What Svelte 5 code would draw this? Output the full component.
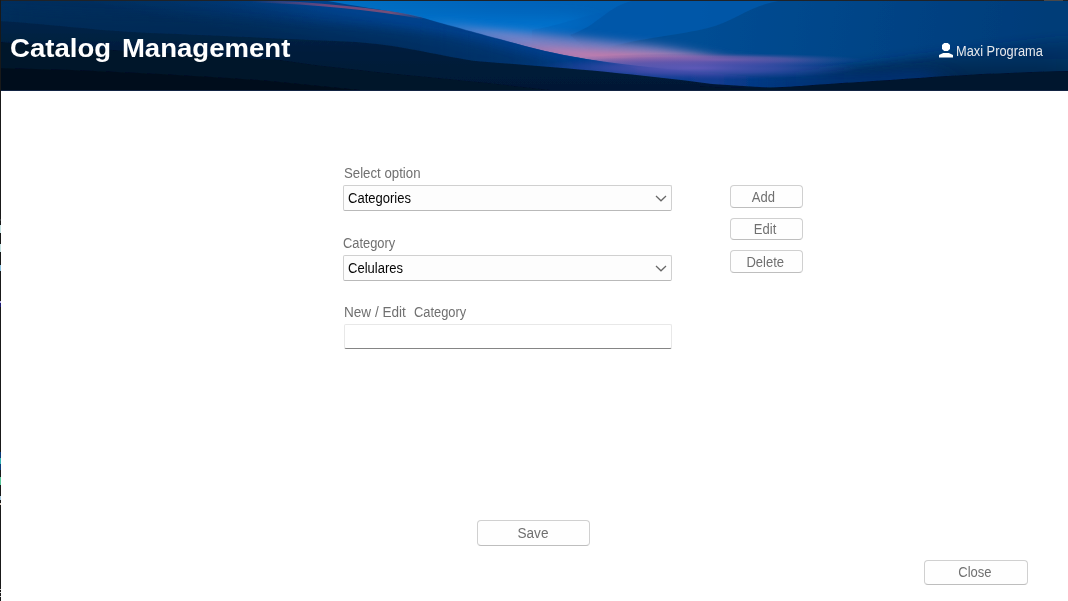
<script>
  let option = $state('Categories');
  let category = $state('Celulares');
  let draft = $state('');
  const edge = [
    [219, 2, '#3b3f42'], [225, 8, '#c7e3e3'], [244, 8, '#c7e3e3'], [265, 6, '#8ec3e0'],
    [301, 2, '#b9b2e6'], [303, 4, '#191970'], [452, 18, '#0b3a78'], [458, 6, '#35b5b5'],
    [477, 8, '#57c79a'], [496, 4, '#a8cbe0'], [503, 2, '#ddd0c4'], [589, 1, '#ccc'],
    [592, 1, '#ccc'], [596, 1, '#ccc']
  ];
</script>

{#snippet chevron()}
  <svg class="chevron" viewBox="0 0 12 7" width="12" height="7" aria-hidden="true">
    <path d="M1 1 L6 5.8 L11 1" fill="none" stroke="#686868" stroke-width="1.25" />
  </svg>
{/snippet}

<div class="window">
  <svg class="edge" width="1" height="601" aria-hidden="true">
    <rect width="1" height="601" fill="#191919" />
    {#each edge as [y, h, fill]}
      <rect {y} width="1" height={h} {fill} />
    {/each}
  </svg>
  <header>
    <svg class="scenery" viewBox="0 0 1068 91" width="1068" height="91" preserveAspectRatio="none" aria-hidden="true">
      <defs>
        <linearGradient id="sky" x1="0" x2="1068" y1="0" y2="0" gradientUnits="userSpaceOnUse">
          <stop offset=".3" stop-color="#0070c4" />
          <stop offset=".46" stop-color="#0064bb" />
          <stop offset=".6" stop-color="#0060b4" />
          <stop offset=".72" stop-color="#0057a5" />
          <stop offset="1" stop-color="#004a86" />
        </linearGradient>
        <linearGradient id="bright" x1="0" y1="0" x2="0" y2="1">
          <stop offset="0" stop-color="#0084e6" stop-opacity="0" />
          <stop offset=".6" stop-color="#0084e2" stop-opacity=".75" />
          <stop offset="1" stop-color="#0084e2" stop-opacity=".6" />
        </linearGradient>
        <linearGradient id="ridge" x1="690" y1="4" x2="1040" y2="60" gradientUnits="userSpaceOnUse">
          <stop offset="0" stop-color="#004e95" />
          <stop offset=".4" stop-color="#00468a" />
          <stop offset="1" stop-color="#003c78" />
        </linearGradient>
        <linearGradient id="fadeRight" x1="0" y1="0" x2="0" y2="1">
          <stop offset="0" stop-color="#002a58" stop-opacity=".3" />
          <stop offset="1" stop-color="#001a3a" stop-opacity="1" />
        </linearGradient>
        <linearGradient id="hill" x1="330" y1="8" x2="322" y2="50" gradientUnits="userSpaceOnUse">
          <stop offset="0" stop-color="#00428c" />
          <stop offset=".4" stop-color="#003774" />
          <stop offset="1" stop-color="#002a58" />
        </linearGradient>
        <linearGradient id="hillRight" x1="420" x2="790" y1="0" y2="0" gradientUnits="userSpaceOnUse">
          <stop offset="0" stop-color="#003d85" stop-opacity=".3" />
          <stop offset=".5" stop-color="#003f91" stop-opacity=".9" />
          <stop offset=".8" stop-color="#1c3f9a" stop-opacity=".7" />
          <stop offset="1" stop-color="#003b91" stop-opacity="0" />
        </linearGradient>
        <linearGradient id="left" x1="0" x2="320" y1="0" y2="0" gradientUnits="userSpaceOnUse">
          <stop offset="0" stop-color="#00305f" stop-opacity=".8" />
          <stop offset="1" stop-color="#002e5b" stop-opacity="0" />
        </linearGradient>
        <linearGradient id="rim" x1="250" x2="425" y1="0" y2="0" gradientUnits="userSpaceOnUse">
          <stop offset="0" stop-color="#794a78" stop-opacity="0" />
          <stop offset=".45" stop-color="#6e477e" />
          <stop offset=".8" stop-color="#755078" />
          <stop offset="1" stop-color="#755078" stop-opacity="0" />
        </linearGradient>
        <linearGradient id="band" x1="0" x2="0" y1="21" y2="85" gradientUnits="userSpaceOnUse">
          <stop offset="0" stop-color="#002449" />
          <stop offset=".5" stop-color="#001d3b" />
          <stop offset="1" stop-color="#001936" />
        </linearGradient>
        <radialGradient id="violet">
          <stop offset="0" stop-color="#6058b8" stop-opacity=".95" />
          <stop offset=".5" stop-color="#4a4cab" stop-opacity=".65" />
          <stop offset="1" stop-color="#303f9c" stop-opacity="0" />
        </radialGradient>
        <radialGradient id="mauve">
          <stop offset="0" stop-color="#a070b8" stop-opacity=".85" />
          <stop offset=".5" stop-color="#7f60b0" stop-opacity=".55" />
          <stop offset="1" stop-color="#404da0" stop-opacity="0" />
        </radialGradient>
        <filter id="b1" x="-20%" y="-60%" width="140%" height="220%"><feGaussianBlur stdDeviation="14 4" /></filter>
        <filter id="b2" x="-30%" y="-100%" width="160%" height="300%"><feGaussianBlur stdDeviation="26 3.5" /></filter>
        <filter id="b3" x="-5%" y="-10%" width="110%" height="120%"><feGaussianBlur stdDeviation=".7" /></filter>
      </defs>
      <rect width="1068" height="91" fill="url(#sky)" />
      <path d="M330 8H560C610 16 590 32 530 34L560 58H330Z" fill="url(#bright)" filter="url(#b1)" />
      <path d="M532 30C568 24 588 12 640 6V50H532Z" fill="#005db5" opacity=".3" filter="url(#b3)" />
      <path d="M570 35C600 25 606 6 636 0H1068V60H600Z" fill="#0056a7" opacity=".8" filter="url(#b3)" />
      <path d="M610 47C640 38 680 35 708 28C738 20 750 4 786 0H1068V91H600Z" fill="url(#ridge)" filter="url(#b3)" />
      <path d="M820 72C900 60 980 48 1098 34V95H820Z" fill="url(#fadeRight)" filter="url(#b2)" />
      <path d="M660 74C730 76 850 74 930 68L960 95H620Z" fill="#003377" opacity=".8" filter="url(#b1)" />
      <path d="M430 22L470 28L520 32L590 39L660 46L710 56L710 68L600 68L540 58L470 36Z" fill="#8a84c4" opacity=".85" filter="url(#b1)" />
      <path d="M490 43L570 49L650 53L730 59L710 63L610 64L550 57Z" fill="#d27ba8" opacity=".85" filter="url(#b2)" />
      <ellipse cx="715" cy="60" rx="150" ry="7" fill="url(#mauve)" />
      <path d="M0 0H322C370 9 405 12 430 20C482 35 510 42 545 51C590 61 620 63 650 73L680 90H0Z" fill="url(#hill)" filter="url(#b3)" />
      <path d="M420 17C482 34 510 42 545 51C600 63 640 67 790 80V91H420Z" fill="url(#hillRight)" filter="url(#b3)" />
      <ellipse cx="695" cy="68" rx="165" ry="12" fill="url(#violet)" />
      <rect width="320" height="91" fill="url(#left)" />
      <path d="M250 1C310 3 370 8 423 18" fill="none" stroke="url(#rim)" stroke-width="2.6" filter="url(#b3)" />
      <path d="M0 8C90 17 180 14 260 20C350 28 420 26 490 45L570 67L0 70Z" fill="#002954" opacity=".5" filter="url(#b1)" />
      <path d="M0 21C60 25 100 31 150 33C230 36 310 40 356 42C400 45 430 54 475 61C540 66 630 73 712 84L820 91H0Z" fill="url(#band)" filter="url(#b3)" />
      <path d="M0 42C80 49 190 54 280 60C350 71 450 78 550 90H0Z" fill="#001329" filter="url(#b3)" />
      <path d="M0 68C100 70 220 77 270 81L370 91H0Z" fill="#000c1e" filter="url(#b3)" />
      <path d="M700 86C770 91 800 85 860 82C930 77 980 73 1070 71V92H700Z" fill="#00122d" filter="url(#b3)" />
      <rect width="1068" height="1" fill="#202226" />
      <rect x="1044" width="19" height="1" fill="#4a4848" />
      <rect y="90" width="1068" height="1" fill="#122342" />
    </svg>
    <h1>Catalog Management</h1>
    <div class="user">
      <svg viewBox="0 0 14 15" width="14" height="15" aria-hidden="true">
        <path d="M5.2 0H8.8L11 2V6L8.8 8H5.2L3 6V2Z M4.2 10H9.8L14 12V14.5H0V12Z" fill="#fff" />
      </svg>
      <span>Maxi Programa</span>
    </div>
  </header>

  <main>
    <div class="fields">
      <div class="field">
        <span class="label l1"><span>Select option</span></span>
        <div class="select" role="combobox" aria-expanded="false" aria-controls="none" tabindex="0"><span>{option}</span>{@render chevron()}</div>
      </div>
      <div class="field second">
        <span class="label l2"><span>Category</span></span>
        <div class="select" role="combobox" aria-expanded="false" aria-controls="none" tabindex="0"><span>{category}</span>{@render chevron()}</div>
      </div>
      <div class="field third">
        <label class="label l3" for="draft"><span>New / Edit</span><span>Category</span></label>
        <input id="draft" bind:value={draft} />
      </div>
    </div>
    <div class="actions">
      <button class="add"><span>Add</span></button>
      <button class="edit"><span>Edit</span></button>
      <button class="delete"><span>Delete</span></button>
    </div>
  </main>
  <footer>
    <button class="save"><span>Save</span></button>
    <button class="close"><span>Close</span></button>
  </footer>
</div>

<style>
  :global(body) { margin: 0; background: #fff; overflow: hidden; }
  .window { position: relative; width: 1068px; height: 601px; display: flex; flex-direction: column; background: #fff; font: 14px/18px "Liberation Sans", Arial, sans-serif; color: #707070; }
  .edge { position: absolute; left: 0; top: 0; z-index: 3; }
  header { position: relative; height: 91px; flex: none; display: flex; justify-content: space-between; box-sizing: border-box; padding: 0 25px 0 10px; color: #fff; }
  .scenery { position: absolute; inset: 0; }
  h1 { position: relative; margin: 33px 0 0; font-size: 26px; line-height: 30px; font-weight: 700; word-spacing: 3px; white-space: nowrap; transform: scaleX(1.06); transform-origin: 0 0; }
  .user { position: relative; display: flex; gap: 3px; width: 104px; height: 18px; margin-top: 42px; color: #e7e9ec; white-space: nowrap; }
  .user svg { margin-top: 1px; flex: none; }
  .user span { transform: scaleX(.915); transform-origin: 0 0; }
  main { height: 429px; flex: none; box-sizing: border-box; padding: 73px 0 0 343px; display: flex; gap: 57px; }
  .fields { width: 330px; }
  .field { height: 70px; }
  .field.second { height: 69px; }
  .label { display: flex; height: 21px; box-sizing: border-box; padding-left: 1px; white-space: nowrap; }
  .label span { transform: scaleX(.945); transform-origin: 0 0; }
  .l2 { padding-left: 0; }
  .label.l2 span, .l3 span + span { transform: scaleX(.92); }
  .l3 span:first-child { transform: scaleX(.97); }
  .l3 { gap: 6px; }
  .select { width: 329px; height: 26px; box-sizing: border-box; border: 1px solid #d0d0d0; border-bottom-color: #b9b9b9; border-radius: 2px; background: #fdfdfd; color: #050505; display: flex; justify-content: space-between; align-items: center; padding: 0 4px 0 4px; }
  .select span { transform: scaleX(.93); transform-origin: 0 0; }
  input { display: block; width: 328px; height: 25px; box-sizing: border-box; border: 1px solid #e8e8e8; border-bottom-color: #858585; border-radius: 2px; background: #fff; margin: 0 0 0 1px; outline: 0; font: inherit; }
  .actions { display: flex; flex-direction: column; gap: 10px; padding-top: 21px; }
  button { display: flex; align-items: center; justify-content: center; box-sizing: border-box; padding: 1px 0 0; font: inherit; color: #707070; background: #fefefe; border: 1px solid #d0d0d0; border-bottom-color: #bebebe; border-radius: 4px; }
  button span { transform: scaleX(.93); }
  .actions button { width: 73px; height: 22.5px; }
  .actions .add { padding-right: 7px; }
  .actions .edit { padding-right: 3px; }
  .actions .delete { padding-right: 3px; }
  footer { flex: 1; display: flex; flex-direction: column; padding-left: 477px; }
  .save { width: 113px; height: 26px; padding: 0 2px 0 0; }
  .save span { transform: scaleX(.97); }
  .close { width: 104px; height: 25px; margin: 14px 0 0 447px; padding: 0 3px 1px 0; }
</style>
